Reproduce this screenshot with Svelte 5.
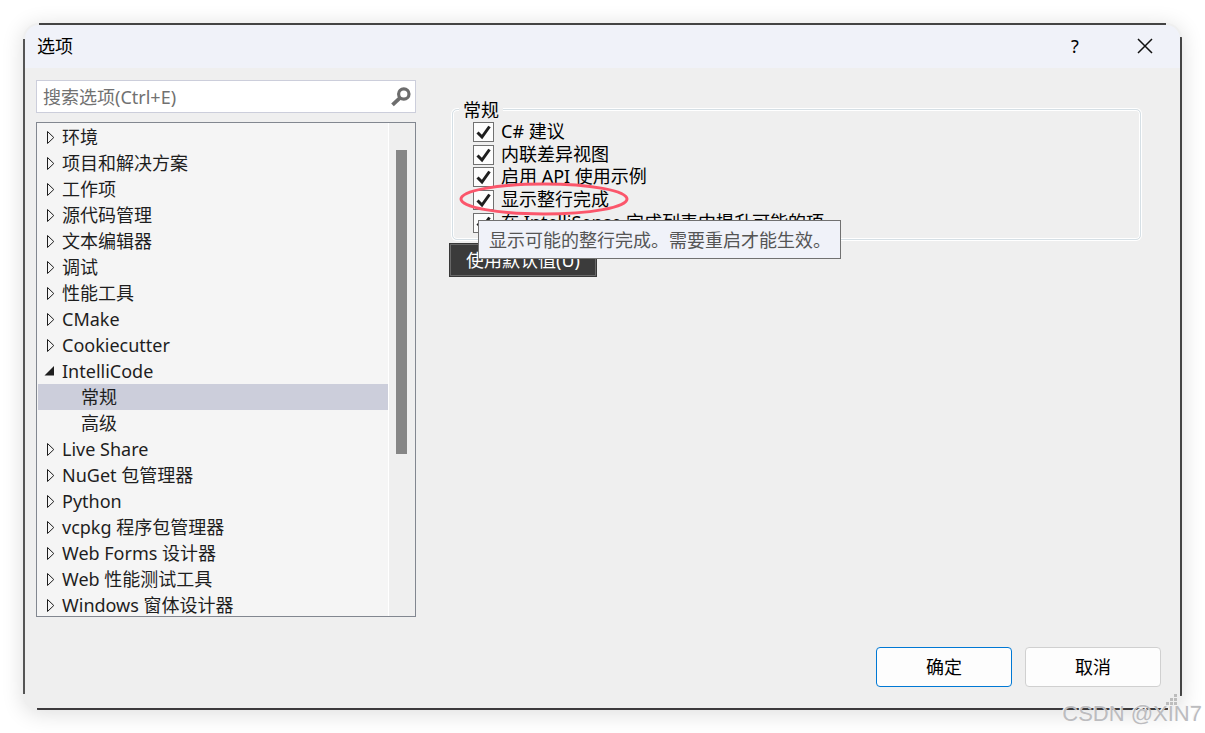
<script lang="ts">
	type TreeItem = { name: string; children?: string[] };

	const tree: TreeItem[] = [
		{ name: '环境' },
		{ name: '项目和解决方案' },
		{ name: '工作项' },
		{ name: '源代码管理' },
		{ name: '文本编辑器' },
		{ name: '调试' },
		{ name: '性能工具' },
		{ name: 'CMake' },
		{ name: 'Cookiecutter' },
		{ name: 'IntelliCode', children: ['常规', '高级'] },
		{ name: 'Live Share' },
		{ name: 'NuGet 包管理器' },
		{ name: 'Python' },
		{ name: 'vcpkg 程序包管理器' },
		{ name: 'Web Forms 设计器' },
		{ name: 'Web 性能测试工具' },
		{ name: 'Windows 窗体设计器' }
	];

	let selected = $state('常规');
	let search = $state('');

	let options = $state([
		{ label: 'C# 建议', checked: true },
		{ label: '内联差异视图', checked: true },
		{ label: '启用 API 使用示例', checked: true },
		{ label: '显示整行完成', checked: true, tip: '显示可能的整行完成。需要重启才能生效。' },
		{ label: '在 IntelliSense 完成列表中提升可能的项', checked: true }
	]);

	function useDefaults() {
		for (const option of options) option.checked = true;
	}
</script>

<main class="page">
	<section class="dialog" role="dialog" aria-label="选项">
		<header class="title-bar">
			<h1>选项</h1>
			<button class="caption" aria-label="帮助">?</button>
			<button class="caption" aria-label="关闭">
				<svg width="16" height="16" viewBox="0 0 16 16">
					<path d="M1 1L15 15M15 1L1 15" stroke="#111" stroke-width="1.5" fill="none" />
				</svg>
			</button>
		</header>

		<div class="body">
			<div class="sidebar">
				<div class="search">
					<input type="text" bind:value={search} placeholder="搜索选项(Ctrl+E)" aria-label="搜索选项" />
					<svg width="20" height="20" viewBox="0 0 20 20" aria-hidden="true">
						<circle cx="12.8" cy="7" r="5.2" fill="none" stroke="#6d6d6d" stroke-width="3.2" />
						<path d="M9 10.8L1.5 17.8" stroke="#6d6d6d" stroke-width="3.8" />
					</svg>
				</div>

				<div class="tree">
					<ul>
						{#each tree as item}
							<li>
								<button class="node" class:selected={selected === item.name}>
									<svg width="12" height="16" viewBox="0 0 12 16" aria-hidden="true">
										{#if item.children}
											<path d="M0.5 12.5H10V3Z" fill="#1e1e1e" />
										{:else}
											<path d="M3.5 2.5V14.5L9.8 8.5Z" fill="none" stroke="#1e1e1e" />
										{/if}
									</svg>
									{item.name}
								</button>
								{#if item.children}
									<ul>
										{#each item.children as child}
											<li>
												<button
													class="node child"
													class:selected={selected === child}
													onclick={() => (selected = child)}>{child}</button
												>
											</li>
										{/each}
									</ul>
								{/if}
							</li>
						{/each}
					</ul>
					<div class="scrollbar"><div class="thumb"></div></div>
				</div>
			</div>

			<div class="content">
				<fieldset>
					<legend>常规</legend>
					<div class="options">
						{#each options as option}
							<div class="option">
								<label>
									<input type="checkbox" bind:checked={option.checked} />
									<span>{option.label}</span>
								</label>
								{#if option.tip}
									<svg class="mark" width="172" height="34" viewBox="0 0 172 34" aria-hidden="true">
										<ellipse cx="86" cy="17" rx="83" ry="15" fill="none" stroke="#fb566b" stroke-width="3" />
									</svg>
									<div class="tooltip" role="tooltip">{option.tip}</div>
								{/if}
							</div>
						{/each}
					</div>
				</fieldset>
				<button class="defaults" onclick={useDefaults}>使用默认值(U)</button>
			</div>
		</div>

		<footer>
			<button class="action primary">确定</button>
			<button class="action">取消</button>
		</footer>

		<svg class="grip" width="12" height="12" viewBox="0 0 12 12" aria-hidden="true">
			<path d="M8 0h3v3h-3zM8 4h3v3h-3zM4 4h3v3h-3zM8 8h3v3h-3zM4 8h3v3h-3zM0 8h3v3h-3z" fill="#bdbdbd" />
		</svg>
	</section>
	<span class="watermark">CSDN @XIN7</span>
</main>

<style>
	:global(body) {
		background: #fff;
	}

	.page {
		position: relative;
		padding: 23px;
		overflow: hidden;
		color: #1e1e1e;
		font-family: 'Noto Sans', 'Noto Sans CJK SC', sans-serif;
		font-size: 18px;
		line-height: 26px;
	}

	button,
	input {
		margin: 0;
		font: inherit;
		color: inherit;
	}

	/* the window frame is left open at its rounded corners */
	.dialog {
		position: relative;
		box-sizing: border-box;
		padding: 2px;
		border-radius: 16px;
		background:
			linear-gradient(#444, #444) 16px 0 / calc(100% - 32px) 2px no-repeat,
			linear-gradient(#3c3a3c, #3c3a3c) 14px 100% / calc(100% - 28px) 2px no-repeat,
			linear-gradient(#555, #555) 0 16px / 2px calc(100% - 32px) no-repeat,
			linear-gradient(#444, #444) 100% 14px / 2px calc(100% - 28px) no-repeat,
			#efefef;
		box-shadow: 0 3px 22px rgba(0, 0, 0, 0.14);
	}

	.title-bar {
		display: flex;
		align-items: center;
		height: 43px;
		padding-left: 12px;
		border-radius: 14px 14px 0 0;
		background: #f0f2f9;
		color: #000;
	}

	h1 {
		flex: 1;
		margin: 0;
		padding-bottom: 2px;
		font-size: 18px;
		font-weight: 400;
	}

	.caption {
		display: flex;
		align-items: center;
		justify-content: center;
		width: 70px;
		height: 43px;
		padding: 0 0 2px;
		border: 0;
		background: none;
	}

	.body {
		display: flex;
		gap: 33px;
		padding: 12px 38px 0 11px;
	}

	.sidebar {
		display: flex;
		flex-direction: column;
		gap: 9px;
		width: 380px;
	}

	.search {
		display: flex;
		align-items: center;
		box-sizing: border-box;
		height: 33px;
		padding: 0 4px 0 6px;
		border: 1px solid #cccedb;
		background: #fff;
	}

	.search input {
		flex: 1;
		min-width: 0;
		padding: 0;
		border: 0;
		outline: 0;
		background: none;
	}

	.search input::placeholder {
		color: #717171;
		opacity: 1;
	}

	.tree {
		display: flex;
		box-sizing: border-box;
		height: 495px;
		border: 1px solid #828790;
		background: #f5f5f5;
		overflow: hidden;
	}

	ul {
		margin: 0;
		padding: 0;
		list-style: none;
	}

	.tree > ul {
		flex: 1;
		padding: 1px 0 0 1px;
	}

	.node {
		display: flex;
		align-items: center;
		gap: 6px;
		width: 100%;
		height: 26px;
		padding: 0 0 0 6px;
		border: 0;
		background: none;
		text-align: left;
		white-space: nowrap;
	}

	.node.child {
		padding-left: 43px;
	}

	.node.selected {
		background: #cccedb;
	}

	.scrollbar {
		box-sizing: border-box;
		width: 27px;
		padding: 27px 8px 0 7px;
		border-left: 1px solid #fff;
		background: #efefef;
	}

	.thumb {
		height: 304px;
		background: #868686;
	}

	.content {
		flex: 1;
		min-width: 0;
		padding-top: 18px;
	}

	fieldset {
		margin: 0 1px 0 3px;
		padding: 0 10px 5px 20px;
		border: 1px solid #d5dfe5;
		border-radius: 5px;
		box-shadow:
			0 0 0 1px #fff,
			inset 0 0 0 1px #fff;
		color: #000;
	}

	legend {
		height: 23px;
		margin-left: -14px;
		padding: 0 4px;
		background: #efefef;
		line-height: 24px;
	}

	.options {
		display: grid;
		grid-template-rows: repeat(5, 1fr);
		height: 113px;
	}

	.option {
		position: relative;
		display: flex;
		align-items: center;
		min-height: 0;
	}

	label {
		display: flex;
		align-items: center;
		gap: 7px;
		line-height: 20px;
		white-space: nowrap;
	}

	label span {
		padding-bottom: 2px;
	}

	input[type='checkbox'] {
		appearance: none;
		box-sizing: border-box;
		width: 21px;
		height: 20px;
		border: 1px solid #717171;
		background: #fdfdfd;
	}

	input[type='checkbox']:checked {
		background: #fdfdfd
			url("data:image/svg+xml,%3Csvg xmlns='http://www.w3.org/2000/svg' viewBox='0 0 19 18'%3E%3Cpath d='M3.5 9.5L8 14L15.5 3.5' fill='none' stroke='%231e1e1e' stroke-width='3'/%3E%3C/svg%3E")
			center / 19px 18px no-repeat;
	}

	.mark {
		position: absolute;
		top: -7px;
		left: -15px;
		z-index: 1;
		pointer-events: none;
	}

	.tooltip {
		position: absolute;
		top: 31px;
		left: 5px;
		z-index: 2;
		box-sizing: border-box;
		height: 39px;
		padding: 0 9px 0 10px;
		border: 1px solid #717171;
		background: #f0f2f9;
		color: #555;
		line-height: 38px;
		white-space: nowrap;
	}

	.defaults {
		display: block;
		width: 148px;
		height: 34px;
		margin-top: 3px;
		padding: 0;
		border: 1px solid #383838;
		outline: 1px solid #686868;
		outline-offset: -2px;
		background: #3b3b3b;
		color: #fff;
	}

	footer {
		display: flex;
		justify-content: flex-end;
		gap: 13px;
		padding: 30px 19px 21px;
	}

	.action {
		width: 136px;
		height: 40px;
		padding: 0;
		border: 1px solid #d0d0d0;
		border-radius: 4px;
		background: #fdfdfd;
		color: #000;
	}

	.action.primary {
		border-color: #0078d4;
	}

	.grip {
		position: absolute;
		right: 4px;
		bottom: 4px;
	}

	.watermark {
		position: absolute;
		right: 3px;
		bottom: 6px;
		color: #bcbcbf;
		font-family: 'Liberation Sans', sans-serif;
		font-size: 22px;
		text-shadow: -1px -1px 0 #f4f4f4;
	}
</style>
